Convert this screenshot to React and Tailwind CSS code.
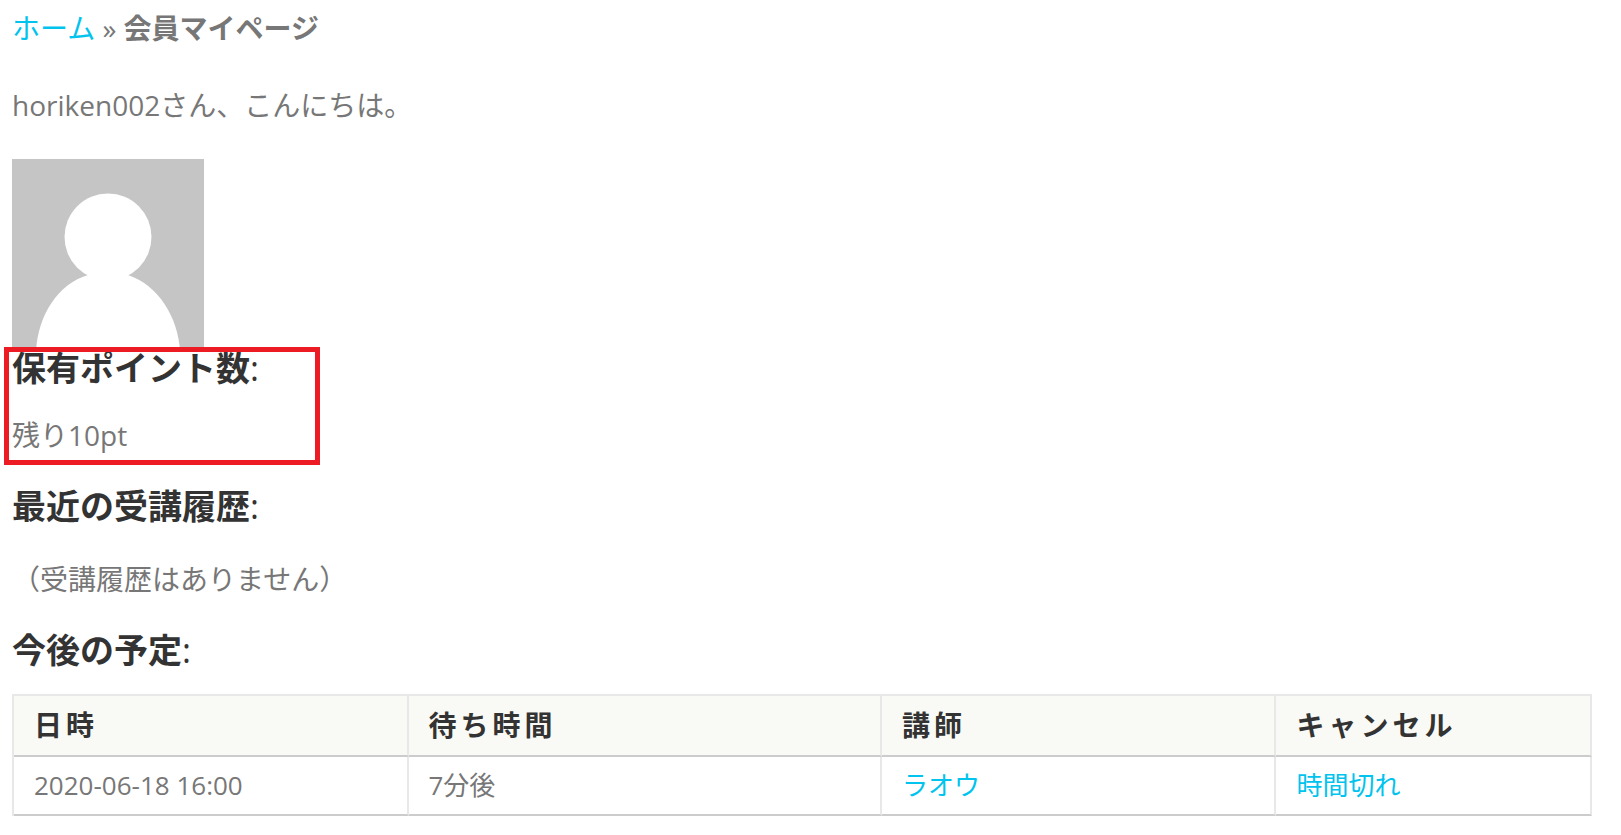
import React from 'react';

const lessons = [
  { date: '2020-06-18 16:00', wait: '7分後', teacher: 'ラオウ', cancel: '時間切れ' },
];

const SectionTitle = ({ children }) => (
  <h3 className="text-[34px] leading-[34px] font-normal text-[#333]">
    <strong className="font-bold">{children}</strong>:
  </h3>
);

const Avatar = () => (
  <svg className="block w-48 h-48" viewBox="0 0 192 192" role="img" aria-label="avatar">
    <rect width="192" height="192" fill="#c5c5c5" />
    <circle cx="96" cy="78" r="43.5" fill="#fff" />
    <path d="M24 192C26 156 46 125 76 116H116C146 126 166 158 168 192Z" fill="#fff" />
  </svg>
);

const HeadCell = ({ className, children }) => (
  <th
    scope="col"
    className={`${className} px-5 py-2 text-left text-[28px] leading-[43px] font-bold tracking-[4px] text-[#333] bg-[#f9faf5] border-r-2 border-r-[#e8e8e8] border-b-2 border-b-[#ccc]`}
  >
    {children}
  </th>
);

const Cell = ({ children }) => (
  <td className="px-5 py-2 text-[26px] leading-[41px] border-r-2 border-r-[#e8e8e8] border-b-2 border-b-[#ccc]">
    {children}
  </td>
);

const App = () => (
  <main className="bg-white pl-3 pr-[29px] pt-2 pb-4 text-[28px] leading-10 text-[#777] font-['Open_Sans','Noto_Sans_CJK_JP',sans-serif]" lang="ja">
    <nav>
      <a href="#home" className="text-[#00c3ee]">ホーム</a> » <strong className="font-bold">会員マイページ</strong>
    </nav>

    <p className="mt-[37px] mb-[34px]">horiken002さん、こんにちは。</p>

    <Avatar />

    <section className="relative">
      <SectionTitle>保有ポイント数</SectionTitle>
      <p className="mt-[30px]">残り10pt</p>
      <div className="absolute -left-2 -top-1 w-[316px] h-[118px] border-5 border-[#ed1c24] pointer-events-none" />
    </section>

    <section className="mt-[34px]">
      <SectionTitle>最近の受講履歴</SectionTitle>
      <p className="mt-9">（受講履歴はありません）</p>
    </section>

    <section className="mt-[34px]">
      <SectionTitle>今後の予定</SectionTitle>
      <table className="mt-[27px] w-full table-fixed border-separate border-spacing-0 border-l-2 border-t-2 border-[#e8e8e8]">
        <thead>
          <tr>
            <HeadCell className="w-[25%]">日時</HeadCell>
            <HeadCell className="w-[30%]">待ち時間</HeadCell>
            <HeadCell className="w-[25%]">講師</HeadCell>
            <HeadCell className="w-[20%]">キャンセル</HeadCell>
          </tr>
        </thead>
        <tbody>
          {lessons.map((lesson) => (
            <tr key={lesson.date}>
              <Cell>{lesson.date}</Cell>
              <Cell>{lesson.wait}</Cell>
              <Cell><a href="#teacher" className="text-[#00c3ee]">{lesson.teacher}</a></Cell>
              <Cell><a href="#cancel" className="text-[#00c3ee]">{lesson.cancel}</a></Cell>
            </tr>
          ))}
        </tbody>
      </table>
    </section>
  </main>
);

export default App;
